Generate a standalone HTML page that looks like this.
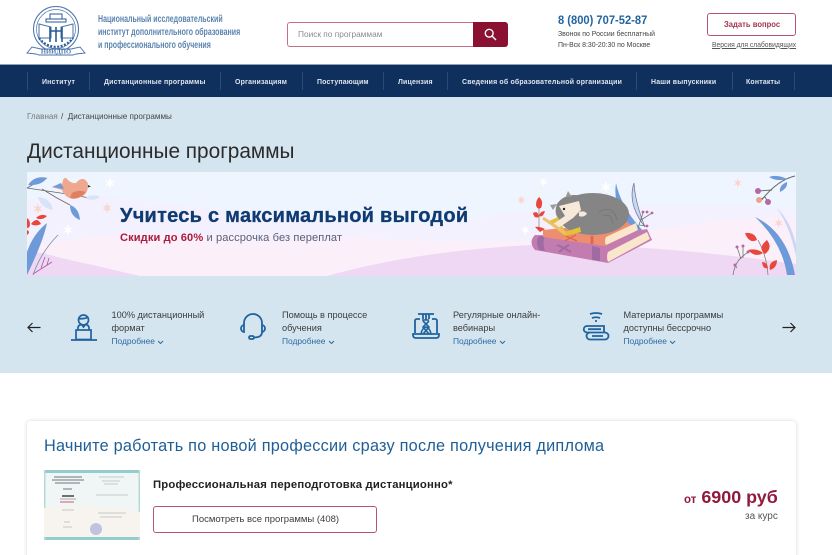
<!DOCTYPE html>
<html lang="ru" style="height:555px;overflow:hidden"><head><meta charset="utf-8"><title>Дистанционные программы</title>
<style>
*{box-sizing:border-box}
html,body{margin:0;padding:0}
body{width:832px;height:555px;overflow:hidden;background:#fff;font-family:"Liberation Sans","Noto Sans CJK SC",sans-serif;color:#333}
#w{position:relative;width:832px;height:555px;overflow:hidden}
.t{position:absolute;white-space:nowrap;transform-origin:0 0;line-height:1}
.sep{position:absolute;top:72px;width:1px;height:18px;background:#2a4a78}
.nav{position:absolute;top:77px;color:#dfe6ef;font-size:7.6px;font-weight:bold;white-space:nowrap;line-height:9px;letter-spacing:.2px;transform:scaleX(.915);transform-origin:0 0}
.more{color:#2c6aa3;font-size:8.4px}
.f{font-size:9.2px;line-height:13px;color:#3c3c3c;top:309px}
svg{position:absolute}
</style></head><body><div id="w">
<!-- logo -->
<svg style="left:26px;top:6px" width="60" height="50" viewBox="0 0 60 50" fill="none" stroke="#4a75a8">
<circle cx="30" cy="23" r="22.500" stroke-width="1"/><circle cx="30" cy="23" r="19.500" stroke-width=".7"/>
<path d="M24 8h12v5H24zM20 13h20v3H20z" stroke="#2a5a94" stroke-width="1"/>
<path d="M13 18l12 3v11H13zM47 18l-12 3v11h12z" stroke-width="1" stroke="#4a75a8"/>
<path d="M24 21v15M36 21v15M24 25h12M30 21v15" stroke="#2a5a94" stroke-width="1.600"/>
<path d="M13 32q6 8 17 9 11-1 17-9" stroke="#2a5a94" stroke-width="2.200" stroke-dasharray="2 1.500"/>
<path d="M1 47l5-6 9 2h30l9-2 5 6-9 1-3 1H13l-3-1z" fill="#fff" stroke-width=".9"/>
<text x="30" y="47.500" font-size="6.600" font-family="Liberation Serif" font-weight="bold" fill="#4a75a8" stroke="none" text-anchor="middle">НИИДПО</text>
</svg>
<div class="t" style="left:98px;top:13px;font-size:10.400px;color:#3f6fa3;line-height:13.200px;transform:scaleX(.675);font-weight:bold;opacity:.85">Национальный исследовательский<br>институт дополнительного образования<br>и профессионального обучения</div>
<!-- search -->
<div style="position:absolute;left:287px;top:22px;width:187px;height:25px;border:1px solid #c96f84;border-right:0;border-radius:3px 0 0 3px"></div>
<div style="position:absolute;left:473px;top:22px;width:35px;height:25px;background:#8a1131;border-radius:0 3px 3px 0"></div>
<svg style="left:484px;top:28px" width="13" height="13" viewBox="0 0 13 13" fill="none" stroke="#fff" stroke-width="1.400"><circle cx="5.200" cy="5.200" r="3.900"/><path d="M8 8l4 4"/></svg>
<div class="t" style="left:298px;top:30px;font-size:8.300px;color:#8b8b8b">Поиск по программам</div>
<!-- phone -->
<div class="t" style="left:558px;top:14px;font-size:12.400px;color:#21659f;font-weight:bold;transform:scaleX(.9)">8 (800) 707-52-87</div>
<div class="t" style="left:558px;top:30px;font-size:7.700px;color:#444;transform:scaleX(.9)">Звонок по России бесплатный</div>
<div class="t" style="left:558px;top:40.500px;font-size:7.700px;color:#444;transform:scaleX(.9)">Пн-Вск 8:30-20:30 по Москве</div>
<div style="position:absolute;left:707px;top:13px;width:89px;height:23px;border:1px solid #b9566f;border-radius:3px"></div>
<div class="t" style="left:724px;top:20px;font-size:8.600px;color:#a53450;font-weight:bold;transform:scaleX(.89)">Задать вопрос</div>
<div class="t" style="left:712px;top:41px;font-size:7.600px;color:#555;text-decoration:underline;transform:scaleX(.885)">Версия для слабовидящих</div>
<!-- nav -->
<div style="position:absolute;left:0;top:64px;width:832px;height:33px;background:#0f2f5d;border-top:1px solid #8da3bb"></div>
<div class="sep" style="left:27px"></div><div class="sep" style="left:89px"></div><div class="sep" style="left:220px"></div><div class="sep" style="left:302px"></div><div class="sep" style="left:383px"></div><div class="sep" style="left:447px"></div><div class="sep" style="left:636px"></div><div class="sep" style="left:732px"></div><div class="sep" style="left:794px"></div>
<div class="nav" style="left:42px">Институт</div>
<div class="nav" style="left:104px">Дистанционные программы</div>
<div class="nav" style="left:235px">Организациям</div>
<div class="nav" style="left:317px">Поступающим</div>
<div class="nav" style="left:398px">Лицензия</div>
<div class="nav" style="left:462px">Сведения об образовательной организации</div>
<div class="nav" style="left:651px">Наши выпускники</div>
<div class="nav" style="left:746px">Контакты</div>
<!-- blue section -->
<div style="position:absolute;left:0;top:97px;width:832px;height:276px;background:#d5e5f0"></div>
<div class="t" style="left:27px;top:113px;font-size:8.100px;color:#777">Главная</div>
<div class="t" style="left:61px;top:113px;font-size:8.100px;color:#444">/&nbsp; Дистанционные программы</div>
<div class="t" style="left:27px;top:142px;font-size:20.800px;color:#2b2b2b">Дистанционные программы</div>
<!-- banner -->
<svg style="left:27px;top:172px" width="769" height="104" viewBox="0 0 769 104">
<defs>
<path id="s" d="M0-6L1.300-1.800 5-3.200 2.200 0 5 3.200 1.300 1.800 0 6-1.300 1.800-5 3.200-2.200 0-5-3.200-1.300-1.800Z"/>
</defs>
<rect width="769" height="104" fill="#eff5ff"/>
<path d="M0 28Q40 22 73 23Q180 38 300 48T473 41Q560 34 656 33T769 40V104H0Z" fill="#f3f1fd"/>
<path d="M0 74Q50 66 106 61Q250 62 380 68T640 56T769 50V104H0Z" fill="#fbeffa"/>
<path d="M0 80L16 81Q40 88 66 93L113 104H0ZM300 104Q400 76 530 72Q640 74 769 92V104Z" fill="#efd8f4"/>
<!-- left foliage -->
<path d="M20 6Q10 10 0 16L40 22L63 26M15 17L30 26L43 33" stroke="#666" stroke-width=".8" fill="none"/>
<path d="M1 13Q8 3 20 6Q14 14 1 13ZM43 33Q52 36 53 48Q43 44 43 33Z" fill="#6d9bda"/>
<path d="M11 25Q24 26 26 38Q14 36 11 25ZM58 26Q66 21 73 25Q66 30 58 26Z" fill="#d8e3f8"/>
<path d="M25 15L35 13Q36 5 39 6Q44 12 49 11Q53 6 57 7Q62 10 61 15Q60 25 47 27Q38 26 35 18Z" fill="#eda88f"/>
<path d="M43 26Q52 28 59 20Q52 17 45 21Z" fill="#e07f61"/>
<path d="M25 15L34 11 37 17Z" fill="#6f9cd8"/>
<path d="M61 13l3 1.500-3 1Z" fill="#333"/>
<path d="M0 80Q6 62 20 51Q16 70 0 103Z" fill="#6d9bda"/>
<path d="M6 103Q14 80 31 63" stroke="#7a8ca8" fill="none" stroke-width=".8"/>
<path d="M0 46Q3 48 3 52T0 56ZM4 52Q10 44 14 52Q8 55 4 52ZM9 46Q14 41 20 44Q15 49 9 46ZM0 58Q4 60 0 63Z" fill="#e8473b"/>
<path d="M6 102L25 90M14 96L18 85M20 93L22 86" stroke="#a05d9e" stroke-width=".8" fill="none"/>
<use href="#s" x="83" y="11" fill="#fff"/><use href="#s" x="41" y="58" fill="#fff"/>
<use href="#s" x="11" y="37" fill="#fbd4cd" transform="translate(1,3.500) scale(.9)"/><use href="#s" x="80" y="36" fill="#fbd4cd" transform="translate(8,3.600) scale(.9)"/>
<!-- leaves behind books -->
<path d="M589 11Q595 40 625 68L606 60Q585 36 589 11Z" fill="#6d9bda"/>
<path d="M607 11Q600 32 618 55Q608 30 607 11Z" fill="#c9d6f5" stroke="#67748f" stroke-width=".7"/>
<path d="M611 56L616 41M614 48L625 41M612 53L619 54" stroke="#777" stroke-width=".8" fill="none"/>
<circle cx="616" cy="40" r="1.400" fill="#b668a5"/><circle cx="625" cy="41" r="1.400" fill="#b668a5"/><circle cx="620" cy="40" r="1.400" fill="#b668a5"/><circle cx="620" cy="54" r="1.400" fill="#b668a5"/>
<!-- red flower -->
<path d="M512 25Q517 29 514 36Q510 38 509 33Q509 28 512 25ZM506 41Q511 38 512 45Q507 47 506 41ZM518 39Q516 46 512 44Q513 39 518 39ZM508 55Q512 54 518 57L513 60Z" fill="#e8473b"/>
<path d="M512 36V56" stroke="#7a6a6a" stroke-width=".6"/>
<!-- books -->
<path d="M508 63L575 65 620 57 625 68 581 91 508 78Q501 70 508 63Z" fill="#c37cb0"/>
<path d="M581 80L620 60 623 67 581 90Q579 85 581 80Z" fill="#f9e6cd"/>
<path d="M512 64Q508 70 512 78L518 79Q515 71 518 64ZM565 74V88L573 89V76Z" fill="#a06ba3"/>
<path d="M530 73L537 76 532 80M542 73L537 76 544 80" stroke="#a06ba3" stroke-width="2" fill="none"/>
<path d="M516 58L600 50 611 58 578 74 516 65Z" fill="#ee8e70"/>
<path d="M579 65L609 51 611 58 579 73Q577 69 579 65Z" fill="#f9e6cd"/>
<path d="M537 63L543 66 538 69M549 63L543 66 550 69" stroke="#e0694c" stroke-width="1.400" fill="none"/>
<path d="M565 64V72" stroke="#e0694c" stroke-width="3"/>
<!-- cat -->
<ellipse cx="566" cy="42" rx="36" ry="21" fill="#858585"/>
<path d="M530 32Q538 20 556 24L560 50Q545 56 538 52Q525 45 530 32Z" fill="#858585"/>
<path d="M520 50L531 45 538 60 553 55 554 60 538 64Z" fill="#e4c236"/>
<path d="M539 24L541 19 545 25ZM526 38L523 33 530 32Z" fill="#a09a98"/>
<path d="M532 34L552 29 554 38 546 46 530 57 526 52 538 44Z" fill="#f7e8d9"/>
<path d="M552 40Q558 38 560 42Q556 46 552 44Z" fill="#f7e8d9"/>
<path d="M516 46L538 61" stroke="#eec06b" stroke-width="3"/>
<circle cx="537" cy="37" r="1.200" fill="#222"/>
<path d="M572 40Q586 32 590 48M576 44Q584 40 586 52" stroke="#777" stroke-width="1" fill="none"/>
<use href="#s" x="579" y="15" fill="#fff"/><use href="#s" x="517" y="10" fill="#fff" transform="translate(103,2) scale(.8)"/>
<use href="#s" x="494" y="28" fill="#fbd4cd" transform="translate(99,5.600) scale(.8)"/><use href="#s" x="498" y="58" fill="#fff" transform="translate(100,11.600) scale(.8)"/>
<!-- right foliage -->
<path d="M768 4Q750 8 733 30M745 18L731 19M738 25L732 28M738 25L741 30" stroke="#666" stroke-width=".9" fill="none"/>
<path d="M742 5Q750 2 760 7Q750 10 742 5ZM753 20Q752 13 760 10Q761 16 753 20Z" fill="#6d9bda"/>
<circle cx="731" cy="19" r="3" fill="#b668a5"/><circle cx="732" cy="28" r="3" fill="#eba48b"/><circle cx="741" cy="30" r="3" fill="#b668a5"/>
<use href="#s" x="711" y="11" fill="#fbd4cd" transform="translate(142,2.200) scale(.8)"/><use href="#s" x="752" y="51" fill="#fbd4cd" transform="translate(150,10.200) scale(.8)"/>
<path d="M750 36Q764 50 769 73V84Q763 55 750 36Z" fill="#c9d6f5"/>
<path d="M728 45Q760 60 768 103H760Q755 70 728 45Z" fill="#6d9bda"/>
<path d="M741 103Q740 85 731 68" stroke="#777" stroke-width=".7" fill="none"/>
<path d="M718 61Q728 60 730 68Q722 72 718 61ZM740 68Q746 76 738 82Q730 76 740 68ZM721 78Q730 76 736 81Q728 86 721 78ZM735 90Q740 90 741 96Q736 98 735 90ZM750 88Q750 96 743 98Q741 90 750 88Z" fill="#e8473b"/>
<path d="M706 103Q708 90 716 84L721 80M710 96L708 93M714 87L710 75M716 86L716 74" stroke="#777" fill="none" stroke-width=".8"/>
<circle cx="710" cy="75" r="1.500" fill="#b668a5"/><circle cx="716" cy="74" r="1.500" fill="#b668a5"/><circle cx="721" cy="80" r="1.500" fill="#b668a5"/><circle cx="708" cy="93" r="1.500" fill="#b668a5"/>
</svg>
<div class="t" style="left:120px;top:206px;font-size:20px;font-weight:bold;color:#0f3a72;letter-spacing:.25px;-webkit-text-stroke:.3px #0f3a72">Учитесь с максимальной выгодой</div>
<div class="t" style="left:120px;top:233px;font-size:11.100px;color:#54617c;letter-spacing:.1px"><b style="color:#a81c3e">Скидки до 60%</b> и рассрочка без переплат</div>
<!-- features -->
<svg style="left:27px;top:322px" width="14" height="11" viewBox="0 0 14 11" fill="none" stroke="#222" stroke-width="1.200"><path d="M13.500 5.500H1M5.500 1L1 5.500l4.500 4.500"/></svg>
<svg style="left:782px;top:322px" width="14" height="11" viewBox="0 0 14 11" fill="none" stroke="#222" stroke-width="1.200"><path d="M.5 5.500H13M8.500 1L13 5.500l-4.500 4.500"/></svg>
<svg style="left:70px;top:312px" width="28" height="29" viewBox="0 0 28 29" fill="none" stroke="#1f639f" stroke-width="1.700"><circle cx="13.500" cy="8" r="5"/><path d="M8.500 6.500q5 1 10-1.500M8 18v-2q0-3 3.500-3.500L13.500 15l2-2.500Q19 13 19 16v2"/><rect x="6" y="18" width="15" height="9.500"/><path d="M1 28H27"/></svg>
<svg style="left:240px;top:312px" width="26" height="29" viewBox="0 0 26 29" fill="none" stroke="#1f639f" stroke-width="1.800"><path d="M4 13V11a9 9 0 0 1 18 0v2"/><path d="M4 13a3.500 3.500 0 0 0-3 3.500A3.500 3.500 0 0 0 4 20zM22 13a3.500 3.500 0 0 1 3 3.500A3.500 3.500 0 0 1 22 20z"/><path d="M22 20q0 5.500-8 5.500"/><rect x="9" y="24" width="5" height="3" rx="1.500"/></svg>
<svg style="left:412px;top:312px" width="28" height="28" viewBox="0 0 28 28" fill="none" stroke="#1f639f" stroke-width="1.800"><path d="M6 2h16M14 2v6M11 2v5M17 2v5M3 21V9q0-2 2-2h3M25 21V9q0-2-2-2h-3M1 22h26v1q0 3-3 3H4q-3 0-3-3z"/><path d="M10 8l7 0M11 9l6 6-6 7M17 9l-6 6 6 7M9 22q1-6 5-7 4 1 5 7" stroke-width="1.600"/></svg>
<svg style="left:582px;top:312px" width="28" height="29" viewBox="0 0 28 29" fill="none" stroke="#1f639f" stroke-width="1.800"><path d="M8 2q6-2 12 0M10 6q4-1.500 8 0M13 9h2"/><path d="M5 14h17v6.500H5a3.200 3.200 0 0 1 0-6.500zM8 20.500h15a3.200 3.200 0 0 1 0 7H8a3.500 3.500 0 0 1 0-7zM6 17.200h13M10 24h11"/></svg>
<div class="t f" style="left:111.500px">100% дистанционный<br>формат</div>
<div class="t more" style="left:111.500px;top:337px">Подробнее</div>
<div class="t f" style="left:282px">Помощь в процессе<br>обучения</div>
<div class="t more" style="left:282px;top:337px">Подробнее</div>
<div class="t f" style="left:453px">Регулярные онлайн-<br>вебинары</div>
<div class="t more" style="left:453px;top:337px">Подробнее</div>
<div class="t f" style="left:623.500px">Материалы программы<br>доступны бессрочно</div>
<div class="t more" style="left:623.500px;top:337px">Подробнее</div>
<svg style="left:157px;top:340px" width="7" height="5" viewBox="0 0 7 5" fill="none" stroke="#2c6aa3"><path d="M1 1l2.500 2.500L6 1"/></svg>
<svg style="left:328px;top:340px" width="7" height="5" viewBox="0 0 7 5" fill="none" stroke="#2c6aa3"><path d="M1 1l2.500 2.500L6 1"/></svg>
<svg style="left:499px;top:340px" width="7" height="5" viewBox="0 0 7 5" fill="none" stroke="#2c6aa3"><path d="M1 1l2.500 2.500L6 1"/></svg>
<svg style="left:669px;top:340px" width="7" height="5" viewBox="0 0 7 5" fill="none" stroke="#2c6aa3"><path d="M1 1l2.500 2.500L6 1"/></svg>
<!-- card -->
<div style="position:absolute;left:27px;top:421px;width:769px;height:160px;background:#fff;border-radius:4px;box-shadow:0 0 4px rgba(0,0,0,.16)"></div>
<div class="t" style="left:44px;top:438px;font-size:16.300px;color:#1f5f96;letter-spacing:.22px">Начните работать по новой профессии сразу после получения диплома</div>
<svg style="left:44px;top:470px" width="96" height="70" viewBox="0 0 96 70">
<rect width="96" height="70" fill="#eff6f5"/>
<path d="M0 0H96V3H0ZM0 67H96V70H0Z" fill="#94cccd"/>
<path d="M0 0H1.500V70H0ZM94.500 0H96V70H94.500Z" fill="#b5dada"/>
<path d="M0 38Q50 32 96 42V67H0Z" fill="#f7f3ee"/>
<path d="M10 7H38M8 10H40M11 13H36M19 19H28" stroke="#6c757e" stroke-width=".9"/>
<path d="M18 26H30" stroke="#444" stroke-width="1.500"/><path d="M16 29H32" stroke="#999" stroke-width=".8"/><path d="M16 32H30" stroke="#c46" stroke-width=".9"/>
<path d="M55 7H80M58 11H76M60 14H74M52 25H84M54 43H82M56 47H78M18 40H30M20 52H26M19 57H28" stroke="#b5bbbf" stroke-width=".7"/>
<circle cx="52" cy="59" r="6" fill="#c0c2e2"/>
</svg>
<div class="t" style="left:153px;top:480px;font-size:11.300px;font-weight:bold;color:#222;letter-spacing:.18px">Профессиональная переподготовка дистанционно*</div>
<div style="position:absolute;left:153px;top:506px;width:224px;height:27px;border:1px solid #b9566f;border-radius:3px"></div>
<div class="t" style="left:192px;top:514.500px;font-size:9.500px;color:#3c3c3c">Посмотреть все программы (408)</div>
<div class="t" style="left:684px;top:489px;font-size:17.900px;font-weight:bold;color:#8f1a3d"><span style="font-size:11.500px">от</span> 6900 руб</div>
<div class="t" style="left:745px;top:512px;font-size:10px;color:#555">за курс</div>
</div></body></html>
